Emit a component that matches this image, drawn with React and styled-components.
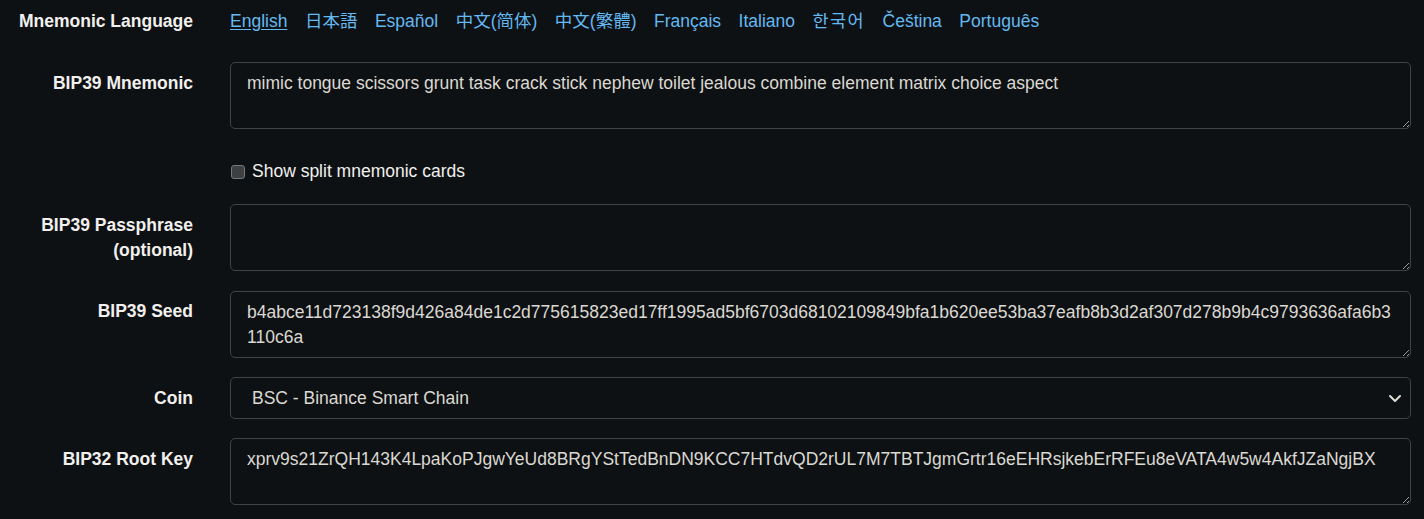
import React from "react";
import styled, { createGlobalStyle } from "styled-components";

const languages = [
  { name: "English" },
  { name: "日本語" },
  { name: "Español" },
  { name: "中文(简体)" },
  { name: "中文(繁體)" },
  { name: "Français" },
  { name: "Italiano" },
  { name: "한국어", spacing: 1.4 },
  { name: "Čeština" },
  { name: "Português" },
];

const seed =
  "b4abce11d723138f9d426a84de1c2d775615823ed17ff1995ad5bf6703d68102109849bfa1b620ee53ba37eafb8b3d2af307d278b9b4c9793636afa6b3110c6a";

export default function App() {
  return (
    <>
      <Global />
      <Form>
        <Row>
          <Label>Mnemonic Language</Label>
          <Langs>
            {languages.map((l, i) => (
              <Lang key={l.name} $active={i === 0} $spacing={l.spacing} href="#">
                {l.name}
              </Lang>
            ))}
          </Langs>
        </Row>

        <Row>
          <Label>BIP39 Mnemonic</Label>
          <Area
            rows={2}
            readOnly
            defaultValue="mimic tongue scissors grunt task crack stick nephew toilet jealous combine element matrix choice aspect"
          />
        </Row>

        <Row>
          <span />
          <Check>
            <Box type="checkbox" />
            Show split mnemonic cards
          </Check>
        </Row>

        <Row>
          <Label>
            BIP39 Passphrase
            <br />
            (optional)
          </Label>
          <Area rows={2} />
        </Row>

        <Row>
          <Label>BIP39 Seed</Label>
          <Area rows={2} readOnly defaultValue={seed} />
        </Row>

        <Row>
          <Label>Coin</Label>
          <SelectWrap>
            <Select defaultValue="bsc">
              <option value="bsc">BSC - Binance Smart Chain</option>
            </Select>
            <Chevron viewBox="0 0 16 16">
              <path
                d="M3 6l5 5 5-5"
                fill="none"
                stroke="#e0dcd6"
                strokeWidth="2"
                strokeLinecap="round"
                strokeLinejoin="round"
              />
            </Chevron>
          </SelectWrap>
        </Row>

        <Row>
          <Label>BIP32 Root Key</Label>
          <Area
            rows={2}
            readOnly
            defaultValue="xprv9s21ZrQH143K4LpaKoPJgwYeUd8BRgYStTedBnDN9KCC7HTdvQD2rUL7M7TBTJgmGrtr16eEHRsjkebErRFEu8eVATA4w5w4AkfJZaNgjBX"
          />
        </Row>
      </Form>
    </>
  );
}

/* ===== styles ===== */

const Global = createGlobalStyle`
  html, body {
    margin: 0;
    background: #0d1113;
    color-scheme: dark;
  }
  body {
    font-family: "Liberation Sans", Arial, sans-serif;
    font-size: 17.5px;
    color: #e8e6e3;
  }
`;

const Form = styled.div`
  padding: 0 13px 0 0;
  display: flex;
  flex-direction: column;
  gap: 19.5px;
`;

const Row = styled.div`
  display: grid;
  grid-template-columns: 193px 1fr;
  column-gap: 37px;
  align-items: start;
`;

const Label = styled.div`
  text-align: right;
  font-weight: 700;
  line-height: 25px;
  padding-top: 8.5px;
  color: #f2f0ee;
`;

const Langs = styled.div`
  display: flex;
  flex-wrap: wrap;
  column-gap: 17.5px;
  line-height: 25px;
  padding-top: 8.5px;
  height: 42.5px;
  box-sizing: border-box;
  font-family: "Liberation Sans", "Noto Sans CJK JP", Arial, sans-serif;
`;

const Lang = styled.a`
  color: #64b9f2;
  letter-spacing: ${(p) => (p.$spacing ? `${p.$spacing}px` : "normal")};
  text-decoration: ${(p) => (p.$active ? "underline" : "none")};
  text-underline-offset: 2px;
`;

const Area = styled.textarea`
  display: block;
  width: 100%;
  box-sizing: border-box;
  margin: 0;
  height: 67px;
  padding: 8px 16px 6px;
  border: 1px solid #3e4346;
  border-radius: 5px;
  background: #0d1113;
  color: #dcd8d2;
  font-family: "Liberation Sans", Arial, sans-serif;
  font-size: 17.5px;
  line-height: 25px;
  resize: vertical;
  outline: none;
`;

const Check = styled.label`
  display: flex;
  align-items: center;
  gap: 7px;
  line-height: 25px;
  padding-top: 10px;
  height: 36px;
  box-sizing: border-box;
  color: #f2f0ee;
`;

const Box = styled.input`
  appearance: none;
  margin: 0 0 0 1px;
  width: 14px;
  height: 14px;
  border: 1px solid #75797c;
  border-radius: 3px;
  background: #3c4043;
`;

const SelectWrap = styled.div`
  position: relative;
`;

const Select = styled.select`
  display: block;
  width: 100%;
  height: 41.5px;
  box-sizing: border-box;
  padding: 0 40px 0 21px;
  appearance: none;
  border: 1px solid #3e4346;
  border-radius: 5px;
  background: #0d1113;
  color: #dcd8d2;
  font-family: "Liberation Sans", Arial, sans-serif;
  font-size: 17.5px;
  outline: none;
`;

const Chevron = styled.svg`
  position: absolute;
  right: 8px;
  top: 13px;
  width: 16px;
  height: 16px;
  pointer-events: none;
`;
